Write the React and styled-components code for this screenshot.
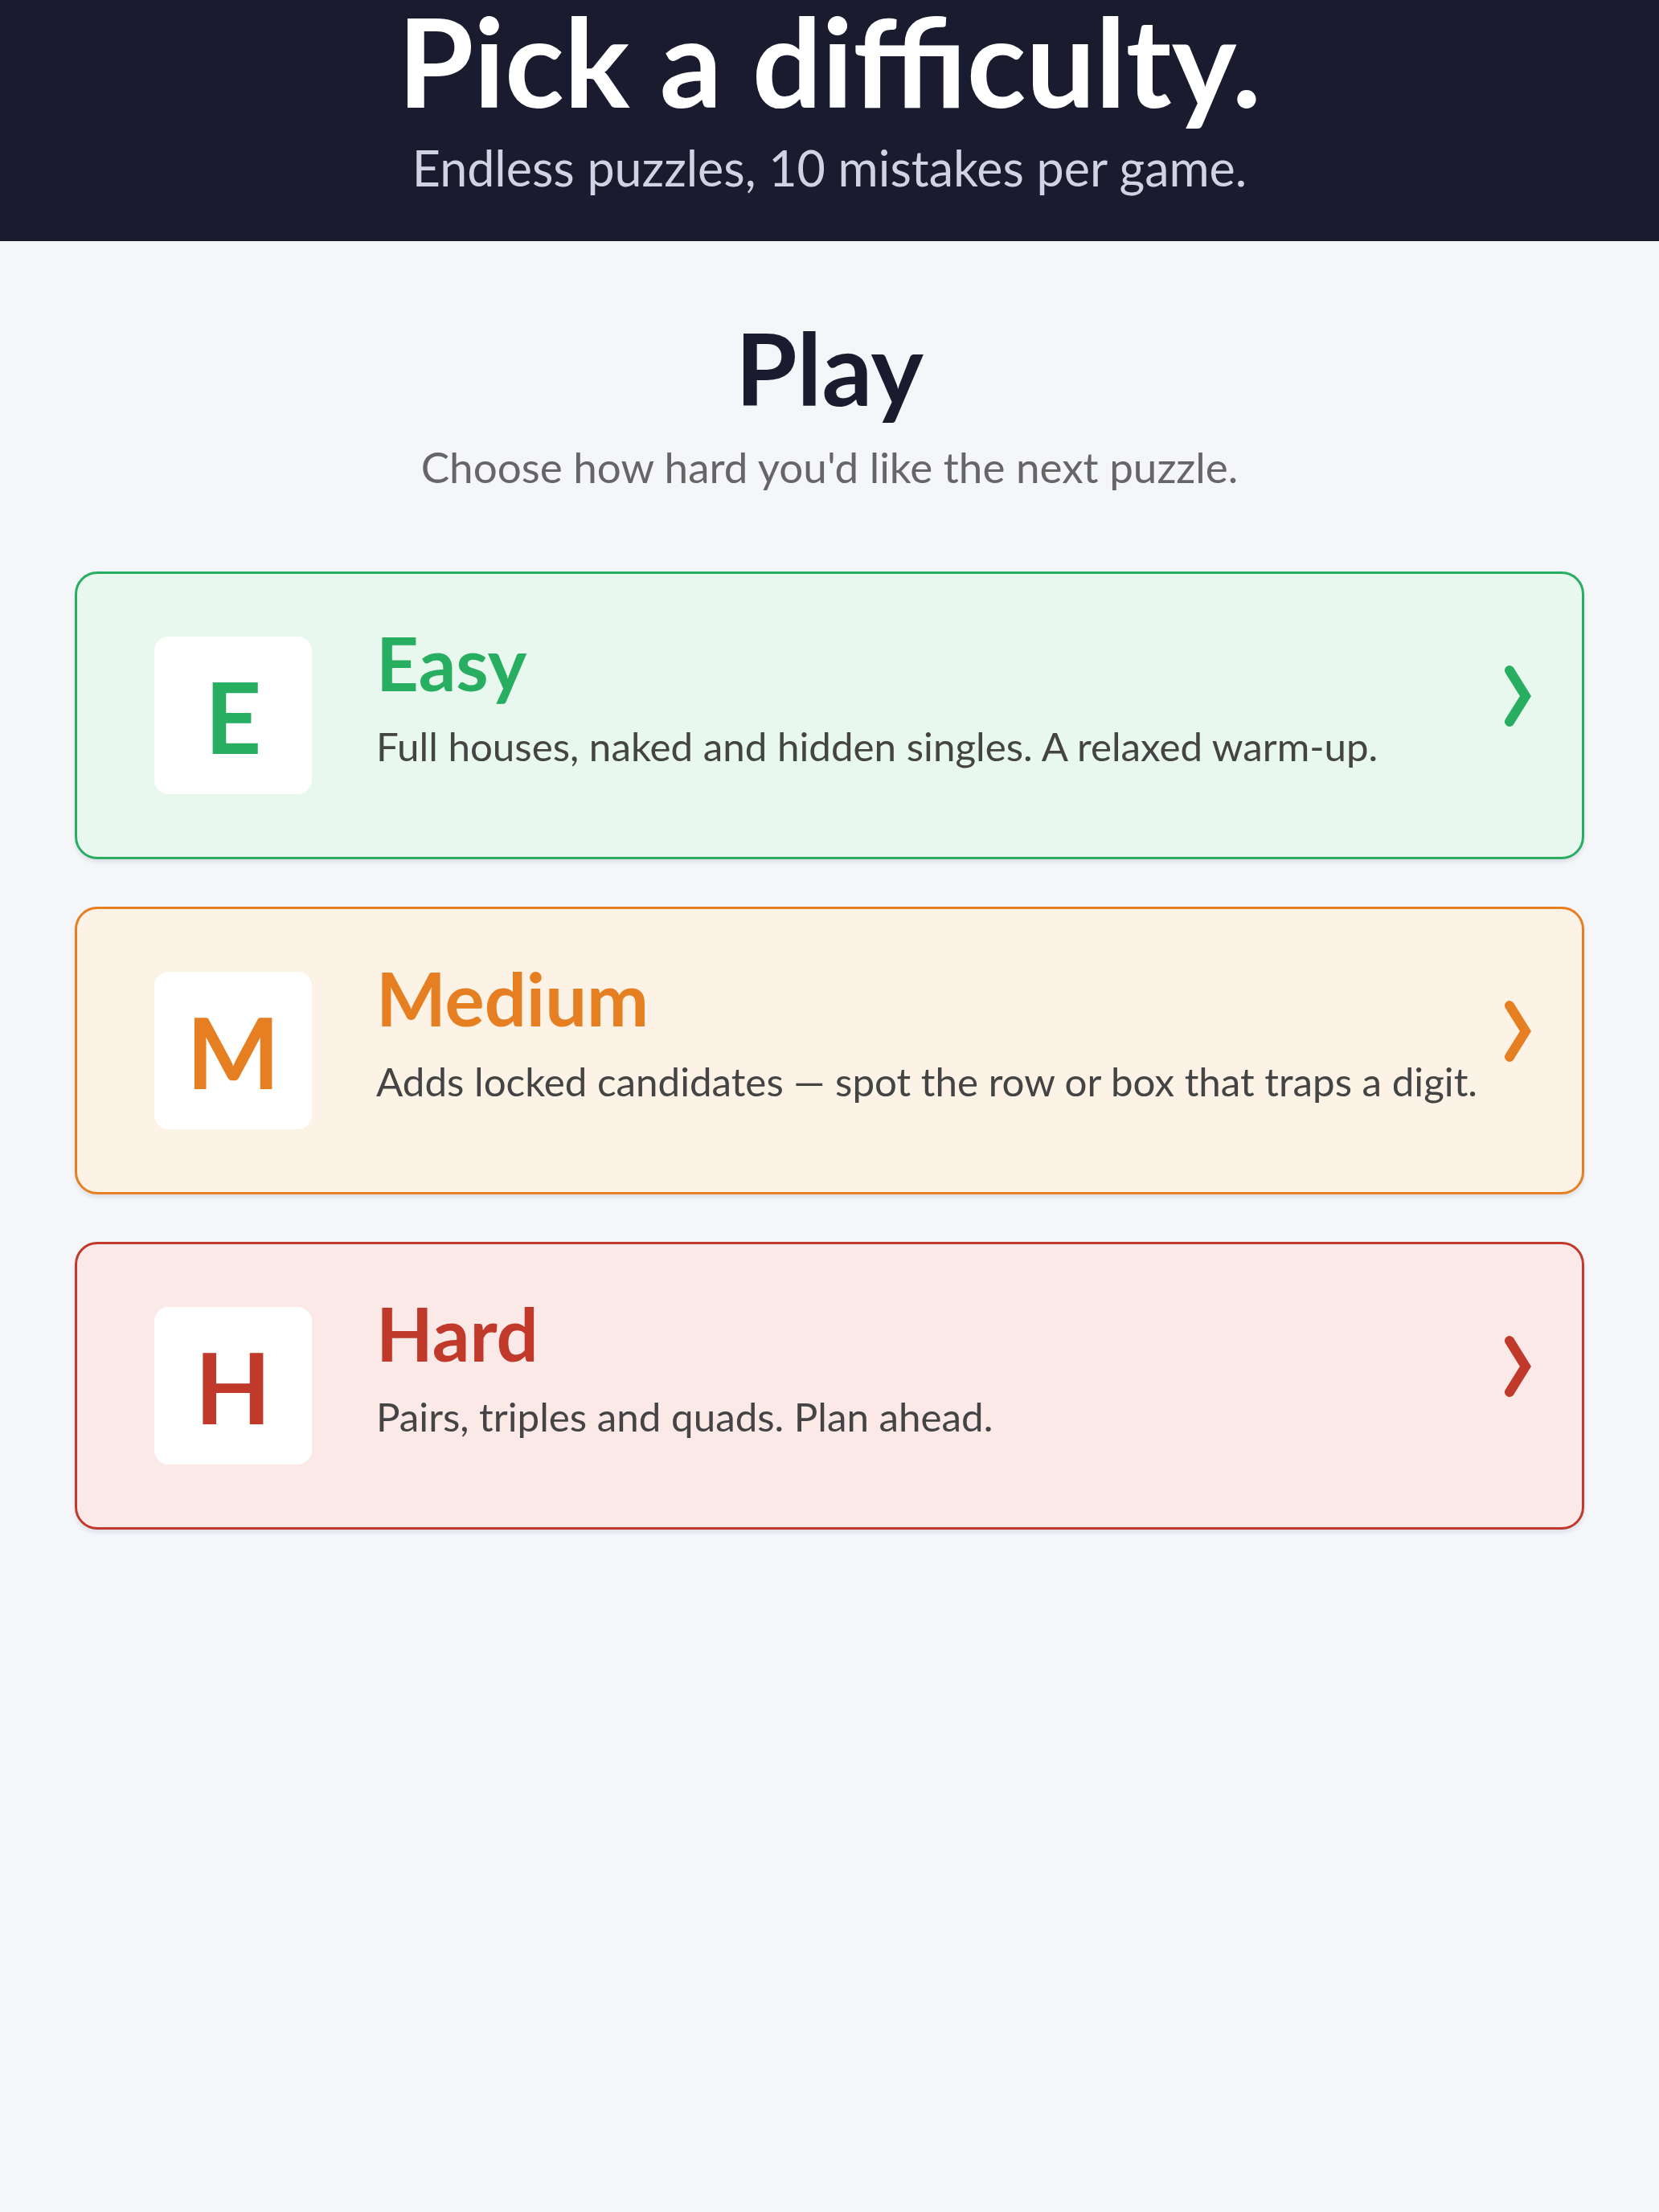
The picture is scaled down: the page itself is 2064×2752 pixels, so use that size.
import React from "react";
import styled, { createGlobalStyle } from "styled-components";

const Global = createGlobalStyle`
  html, body {
    margin: 0;
    padding: 0;
    background: #f5f6fa;
    min-height: 100%;
  }
  body {
    font-family: Lato, "Noto Sans", "Liberation Sans", sans-serif;
    -webkit-font-smoothing: antialiased;
  }
  * { box-sizing: border-box; }
`;

const Page = styled.div`
  min-height: 2752px;
  background: #f5f6fa;
  display: flex;
  flex-direction: column;
`;

const Header = styled.header`
  background: #1a1b2e;
  height: 300px;
  padding-top: 1px;
  display: flex;
  flex-direction: column;
  align-items: center;
`;

const HeaderTitle = styled.h1`
  margin: 0;
  font-size: 153px;
  line-height: 0.98;
  font-weight: 700;
  color: #ffffff;
`;

const HeaderSub = styled.p`
  margin: 21px 0 0;
  font-size: 61px;
  line-height: 1.2;
  font-weight: 400;
  color: #cfd3e2;
`;

const Main = styled.main`
  padding: 83px 93px 0;
  display: flex;
  flex-direction: column;
  align-items: stretch;
`;

const SectionTitle = styled.h2`
  margin: 0;
  text-align: center;
  font-size: 124px;
  line-height: 1.2;
  font-weight: 700;
  color: #1a1b2e;
`;

const SectionSub = styled.p`
  margin: 17px 0 0;
  text-align: center;
  font-size: 53px;
  line-height: 1.2;
  color: #666666;
`;

const CardList = styled.div`
  margin-top: 99px;
  display: flex;
  flex-direction: column;
  gap: 59px;
`;

const Card = styled.button`
  display: flex;
  align-items: center;
  width: 100%;
  height: 358px;
  padding: 0 63px 0 96px;
  border: 3px solid ${(p) => p.$accent};
  border-radius: 28px;
  background: ${(p) => p.$bg};
  box-shadow: 0 4px 5px rgba(30, 35, 70, 0.09);
  font-family: inherit;
  text-align: left;
  cursor: pointer;
`;

const Badge = styled.div`
  flex: 0 0 196px;
  width: 196px;
  height: 196px;
  border-radius: 18px;
  background: #ffffff;
  display: flex;
  align-items: center;
  justify-content: center;
  font-size: 123px;
  font-weight: 700;
  line-height: 1;
  color: ${(p) => p.$accent};
`;

const TextCol = styled.div`
  flex: 1;
  min-width: 0;
  margin-left: 80px;
  margin-bottom: 48px;
  display: flex;
  flex-direction: column;
`;

const CardTitle = styled.div`
  font-size: 92px;
  line-height: 1.2;
  font-weight: 700;
  color: ${(p) => p.$accent};
`;

const CardDesc = styled.div`
  margin-top: 13px;
  font-size: 49.3px;
  line-height: 1.4;
  color: #444444;
  white-space: nowrap;
`;

const Chevron = styled.svg`
  flex: 0 0 40px;
  width: 40px;
  height: 84px;
  margin-bottom: 48px;
  margin-left: 8px;
`;

const levels = [
  {
    key: "E",
    name: "Easy",
    desc: "Full houses, naked and hidden singles. A relaxed warm-up.",
    accent: "#27ae60",
    bg: "#e8f8ef",
  },
  {
    key: "M",
    name: "Medium",
    desc: "Adds locked candidates \u2014 spot the row or box that traps a digit.",
    accent: "#e67e22",
    bg: "#fdf2e6",
  },
  {
    key: "H",
    name: "Hard",
    desc: "Pairs, triples and quads. Plan ahead.",
    accent: "#c0392b",
    bg: "#fbe9e8",
  },
];

export default function App() {
  return (
    <>
      <Global />
      <Page>
        <Header>
          <HeaderTitle>Pick a difficulty.</HeaderTitle>
          <HeaderSub>Endless puzzles, 10 mistakes per game.</HeaderSub>
        </Header>
        <Main>
          <SectionTitle>Play</SectionTitle>
          <SectionSub>Choose how hard you'd like the next puzzle.</SectionSub>
          <CardList>
            {levels.map((l) => (
              <Card key={l.key} $accent={l.accent} $bg={l.bg}>
                <Badge $accent={l.accent}>{l.key}</Badge>
                <TextCol>
                  <CardTitle $accent={l.accent}>{l.name}</CardTitle>
                  <CardDesc>{l.desc}</CardDesc>
                </TextCol>
                <Chevron viewBox="0 0 40 84" aria-hidden="true">
                  <polyline
                    points="13,10 33,42 13,74"
                    fill="none"
                    stroke={l.accent}
                    strokeWidth="12"
                    strokeLinecap="round"
                    strokeLinejoin="miter"
                  />
                </Chevron>
              </Card>
            ))}
          </CardList>
        </Main>
      </Page>
    </>
  );
}
